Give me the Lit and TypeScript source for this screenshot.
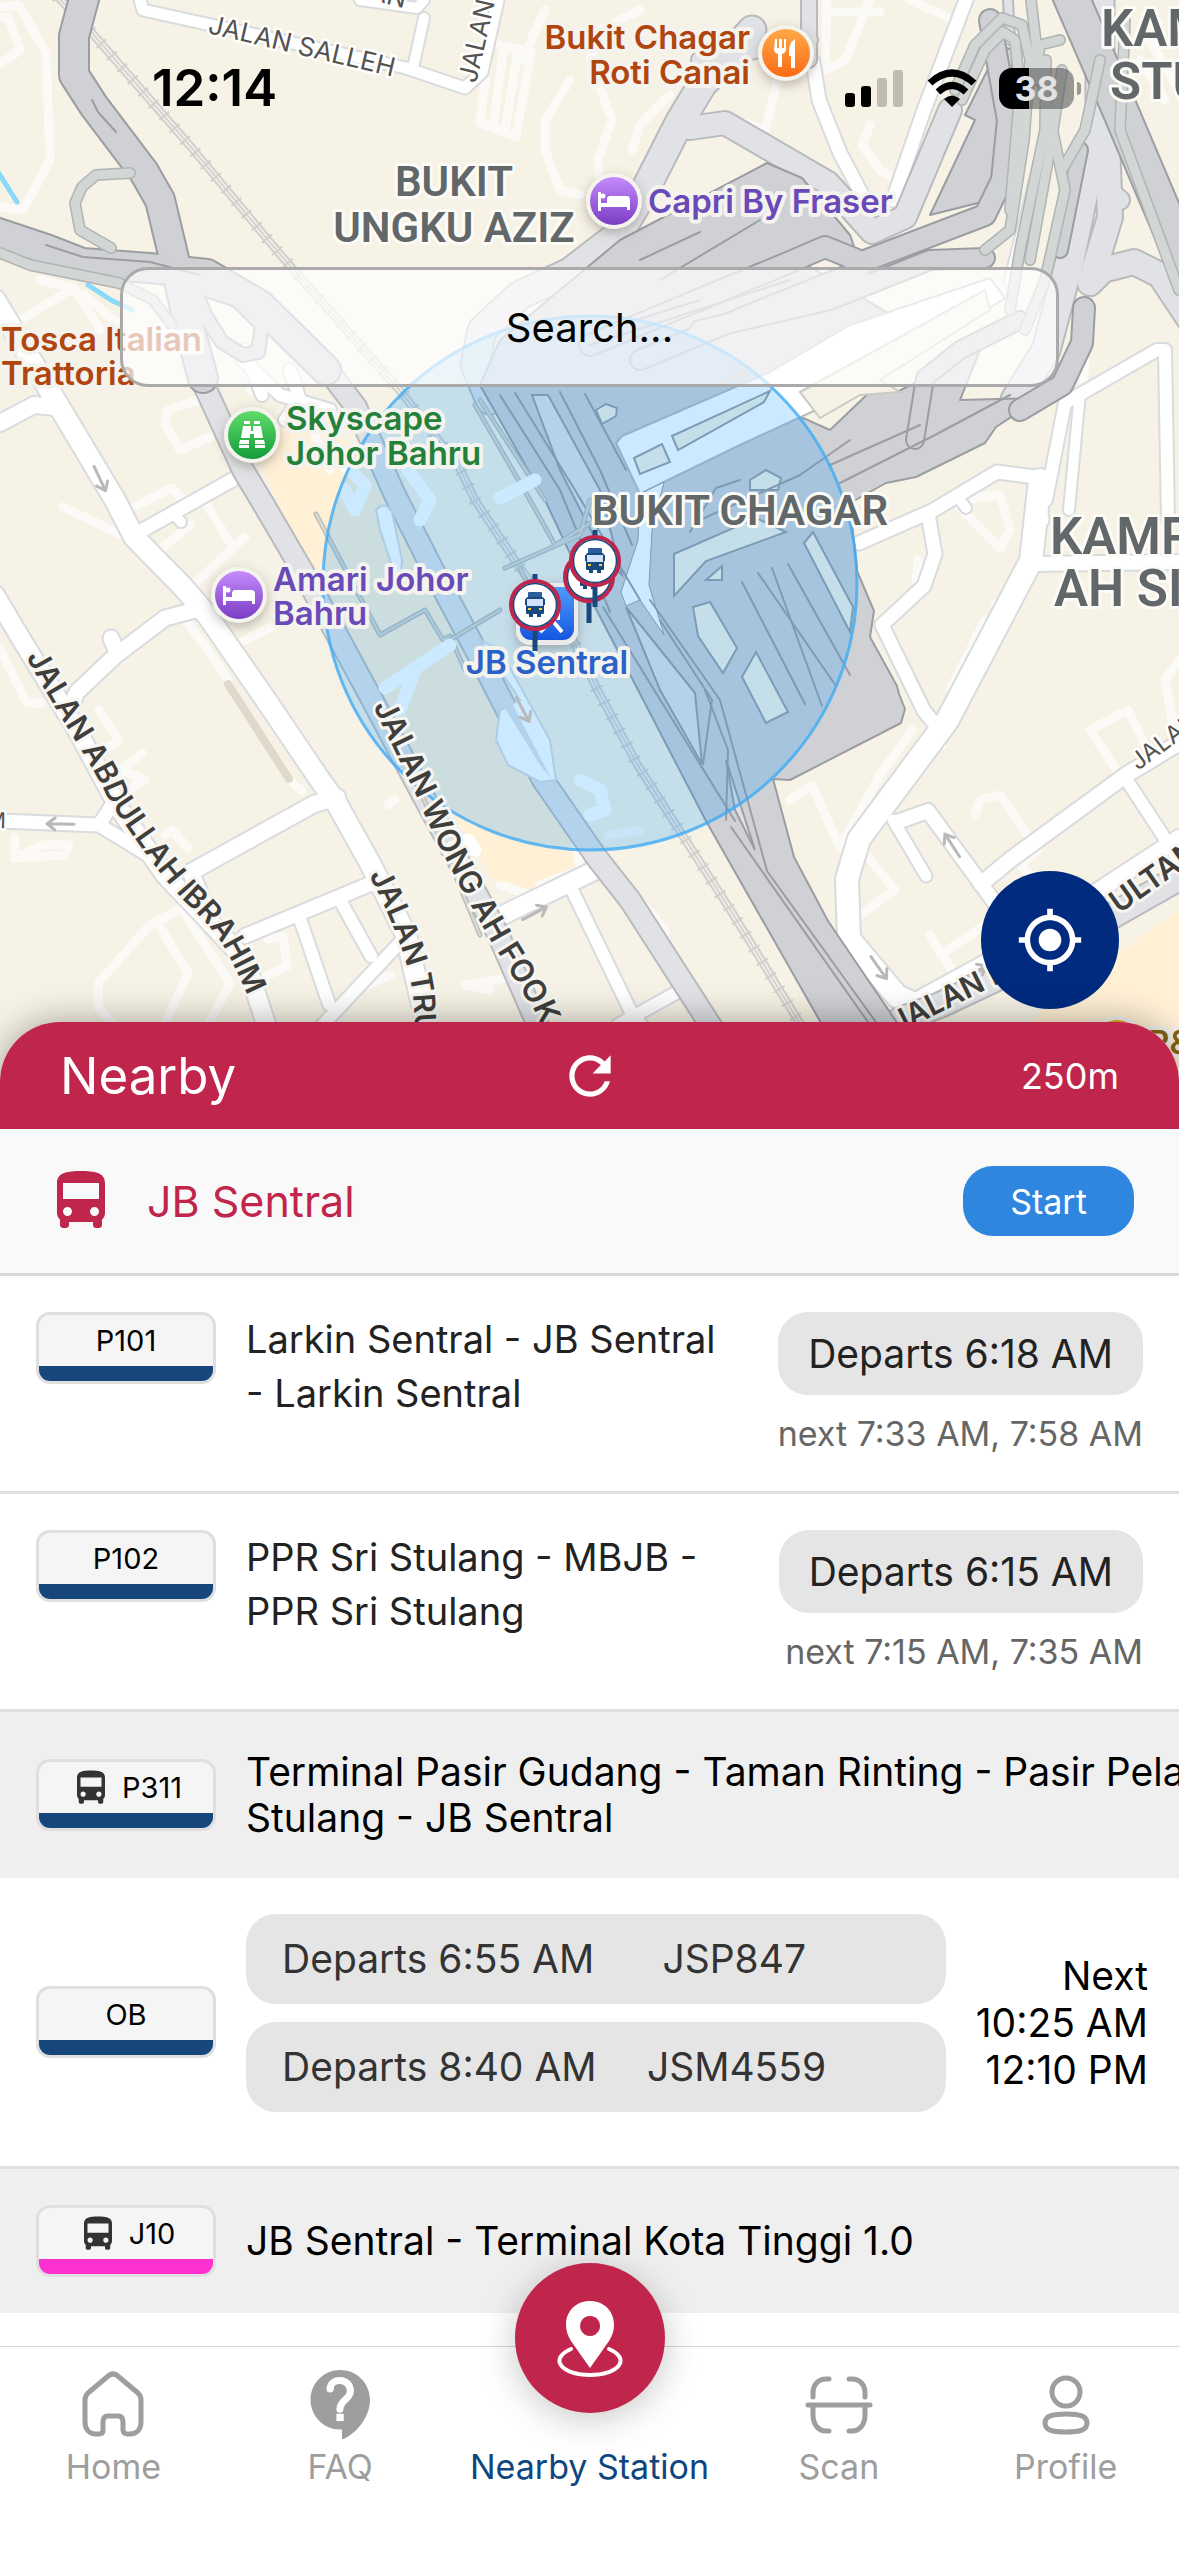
import { LitElement, html, css, svg, nothing } from "lit";
import { customElement, property } from "lit/decorators.js";

const busIcon = html`<svg viewBox="0 0 24 24" aria-hidden="true"><path fill="currentColor" fill-rule="evenodd" d="M4 16c0 .88.39 1.67 1 2.22V20c0 .55.45 1 1 1h1c.55 0 1-.45 1-1v-1h8v1c0 .55.45 1 1 1h1c.55 0 1-.45 1-1v-1.78c.61-.55 1-1.34 1-2.22V6c0-3.5-3.58-4-8-4s-8 .5-8 4v10zm3.5 1c-.83 0-1.500-.67-1.500-1.500S6.670 14 7.500 14s1.500.67 1.500 1.500S8.330 17 7.500 17zm9 0c-.83 0-1.500-.67-1.500-1.500s.67-1.500 1.500-1.500 1.500.67 1.500 1.500-.67 1.500-1.500 1.500zM18 11.300H6V6h12z"/></svg>`;

/* ---------- Map geometry, in map units ---------- */

const services = [
  "M0 7L19 5 46 53 50 160 23 210 0 207", "M0 17L8 17 20 50 0 64", "M490 43L480 123 516 137 531 52 490 43M504 46L493 127M518 49L505 132",
  "M545 10L522 60M570 80L545 120 545 150 560 190 580 195", "M199 400L168 410 165 423 180 450 210 437", "M134 507L172 488 182 500",
  "M63 507L126 537", "M206 504L233 547M245 537L190 588M190 525L160 550", "M188 623L228 679M291 781L302 791M275 625L241 642",
  "M0 649L27 703 42 703", "M180 909L149 926 98 983 98 1007 119 1030M157 922L188 973 165 1024M184 912L230 983 207 1027",
  "M268 939L283 936 287 966 264 977", "M99 710L119 740 103 750M142 753L122 770 145 780 126 791", "M15 838L15 858 65 855 69 845 42 845 15 858",
  "M165 835L172 830 188 848", "M390 975L368 985", "M40 280L74 288 20 320M74 288L100 330M84 295L120 325",
  "M600 190L598 160 612 120 590 60 600 30 640 10M632 150L640 125 670 95", "M827 0L825 70 845 60 870 0M825 12L880 12",
  "M910 0L950 18M870 125L862 145 880 170 905 185M735 120L765 130 778 80", "M957 505L1000 548 1010 530 1000 495 960 500",
  "M918 560L916 580M995 605L1003 600", "M975 815L980 800 1000 795 1038 850 1020 865 1035 880", "M790 800L812 785 840 848 880 775 912 730",
  "M858 845L895 890 860 915", "M930 935L955 975M940 955L985 925", "M1126 785L1090 730 1128 710 1145 745M1179 660L1165 680 1172 720",
  "M935 720L942 745M985 620L950 690", "M640 830L608 835M600 855L665 930 665 960M500 885L530 895M575 835L580 870 540 885", "M465 985L490 990",
  "M1140 60L1165 100M1150 40L1179 90", "M395 800L388 805M1085 360L1082 400", "M520 975L470 985", "M250 390L300 400 330 470",
];

const streets: Array<[string, number]> = [
  ["M140 0L143 10 406 68 465 88 482 72 498 0", 11], ["M413 68L424 18", 10], ["M360 0L417 8 424 0", 10],
  ["M-5 300L57 403 115 500 134 537 184 588 207 615 268 703 318 777 337 804 371 865 406 935 430 1040", 20],
  ["M0 423L34 405 57 407", 16], ["M241 475L134 535", 13], ["M172 512L181 522", 10],
  ["M-5 595L23 642 77 730 119 808 165 875 207 919 245 960 268 1030", 18], ["M195 610L165 618 115 656 77 692 69 710", 15], ["M111 638L116 650", 15],
  ["M0 821L99 825 153 858 170 875M99 825L115 800", 13], ["M337 797L314 804 191 872 200 895", 16], ["M375 882L245 936", 14],
  ["M299 916L329 1004M341 902L371 956M406 936L318 1030", 12], ["M600 868L501 916", 18], ["M572 890L630 1010 645 1030M683 989L618 1025", 12],
  ["M813 62L819 100 840 153 870 210 893 225", 13], ["M966 0L924 110 893 200", 13], ["M1045 140L1010 280", 10],
  ["M1040 480L1031 561 947 721 859 839 847 879 849 939 897 996 916 1005", 22], ["M1046 500L1065 403 1157 350 1165 350 1168 520", 12], ["M1080 393L1069 510", 10],
  ["M859 543L932 511 997 472 1035 477 1042 520", 13], ["M928 514L935 554 924 586 882 625 924 711 939 729", 13], ["M960 500L966 508", 10],
  ["M1031 564L1179 562", 14], ["M981 884L1010 860 1126 775 1179 743", 15], ["M1126 779L1179 860", 12],
  ["M897 822L928 811 1000 910", 14], ["M893 820L926 876", 11], ["M916 1001L1000 955 1179 838", 16],
  ["M262 395L245 350M243 360L280 395 330 410", 12], ["M290 370L300 400 285 420", 12],
];

const arterials: Array<[string, number]> = [
  ["M203 383L243 470 264 505 302 570 337 635 375 705 421 792 459 862 497 932 540 1030", 20],
  ["M333 377L356 407 394 493 432 568 482 662 543 780 597 858 630 900 720 1040", 20],
  ["M809 0L809 60", 14], ["M1008 0L1010 40", 8],
  ["M752 30L702 85 679 123 645 190 618 235 570 272 520 295 482 330 475 365 490 400", 27],
  ["M690 128L725 123 828 183 872 232 905 217 950 110", 22], ["M700 60L809 40", 16],
  ["M1100 0L1100 110 1088 173 1070 260 1046 350 1015 400", 27], ["M1107 143L1110 217 1090 283 1103 270 1134 262 1160 275 1190 320", 24],
  ["M1107 190L1120 200", 18], ["M900 1020L940 1005 1031 962 1179 878", 24],
];

const highways: Array<[string, number]> = [
  ["M85 -5L74 36 74 75 94 106 144 172 160 200 172 250 190 330 203 378", 28],
  ["M-5 232L46 249 82 263 149 268 207 274 260 305 326 370", 28],
  ["M190 285L237 300 262 325 258 352 243 355 222 342 205 315 195 290", 12],
  ["M590 345L790 262 825 247 862 262 985 215 1002 180 1008 120 990 20", 20],
  ["M700 330L830 300 930 260 985 258", 18], ["M640 360L760 310 860 270", 18],
  ["M1068 -10L1120 110 1190 275", 34], ["M1084 308L1082 343 1062 385 1020 410", 20],
  ["M1020 320L960 350 925 378 915 440", 16], ["M1060 250L1080 150", 14],
];

const ramps = [
  "M130 173L96 175 82 187 75 203 80 230 111 248", "M0 253L30 265 119 283 153 300 172 325",
  "M955 90L975 45 1002 18 1022 25 1030 60 1024 140 1010 230 985 250", "M962 100L985 50 1003 32 1015 40 1020 90 1010 210",
  "M1031 0L1038 60 1065 190 1045 280 1025 330", "M1046 60L1045 130 1020 250 1010 310", "M1062 70L1050 150 1030 260",
  "M1100 60L1085 130 1062 170", "M1125 20L1120 130 1179 290", "M1060 40L1040 45 1035 80",
];

const landPatches = [
  "M674 554L756 518 786 532 706 561 674 596Z", "M693 607L710 602 737 648 723 673 698 636Z", "M742 677L756 652 788 712 766 723Z",
  "M804 543L813 532 853 607 850 632Z", "M596 410L606 404 617 408 616 416 602 424Z", "M750 480L766 470 781 478 778 490 750 490Z",
  "M634 458L662 444 670 462 640 474Z", "M672 436L770 391 764 402 678 450Z", "M706 580L722 566 722 580Z",
];

const deckLines = [
  "M742 582L805 704M758 573L836 686M772 568L822 706M788 564L850 675", "M603 607L735 821M731 827L870 1025",
  "M650 600L720 700 767 871 878 1025", "M500 395L560 490 610 612M515 393L575 490 640 600",
  "M560 392L600 470 632 545M585 394L626 470", "M700 520L800 475 850 440M690 532L716 488 740 480",
  "M840 483L935 435 1010 395M830 465L920 425M590 345L790 280",
  "M46 245L83 257 150 262 200 275M92 100L98 112 116 132", "M640 260L700 232M660 280L760 220M620 325L700 300",
  "M703 764L712 700 660 620M726 820L728 750 705 690",
];

const footLines = [
  "M316 514L380 635 425 610 443 640 450 636 465 670", "M450 640L500 610M475 405L530 500 555 545 595 520M505 568L580 535 590 500",
  "M520 568L535 600 550 590M420 790L480 935", "M480 400L545 500",
];

const rail = "M57 -4L92 33 191 147 268 240 291 267 402 393 459 467 475 500 520 568 574 642 597 689 637 764 683 836 733 914 810 1040";

const bigLabels: Array<[number, number, string, number, string]> = [
  [454, 196, "BUKIT", 42, "middle"], [454, 242, "UNGKU AZIZ", 42, "middle"], [740, 525, "BUKIT CHAGAR", 42, "middle"],
  [1050, 554, "KAMPUNG", 51, "start"], [1054, 606, "AH SIANG", 51, "start"], [1101, 46, "KAMPUNG", 51, "start"], [1110, 99, "STULANG", 51, "start"],
];

const poiLabels: Array<[number, number, string, string, string]> = [
  [750, 49, "Bukit Chagar", "#b0450f", "end"], [750, 84, "Roti Canai", "#b0450f", "end"], [648, 213, "Capri By Fraser", "#6a4ab8", "start"],
  [1, 351, "Tosca Italian", "#b0450f", "start"], [1, 385, "Trattoria", "#b0450f", "start"], [286, 430, "Skyscape", "#25803a", "start"],
  [286, 465, "Johor Bahru", "#25803a", "start"], [273, 591, "Amari Johor", "#6a4ab8", "start"], [273, 625, "Bahru", "#6a4ab8", "start"],
  [547, 674, "JB Sentral", "#2b62c8", "middle"],
];

const streetLabels: Array<[string, string, string, number]> = [
  ["s1", "M207 33L420 83", "JALAN SALLEH", 26], ["s2", "M476 84L500 -20", "JALAN", 26], ["s3", "M368 -1L430 15", "AN", 26],
  ["s4", "M1138 771L1240 695", "JALAN", 24], ["s5", "M-14 828L60 829", "M", 22],
];

const roadLabels: Array<[string, string, string, number]> = [
  ["r1", "M26 657Q50 700 75 740T107 797Q125 825 143 850T184 901Q205 920 218 938T254 1010L262 1040", "JALAN ABDULLAH IBRAHIM", 30],
  ["r2", "M373 706L417 797Q437 845 465 895T494 946L536 1014 566 1080", "JALAN WONG AH FOOK", 31],
  ["r3", "M369 875Q390 915 402 950T414 1015L418 1080", "JALAN TRUS", 30],
  ["r4", "M897 1034L1010 978", "JALAN I", 30], ["r5", "M1119 914L1230 836", "ULTAN", 31],
];

const oneWay: Array<[number, number, number]> = [[100, 479, 65], [60, 824, 181], [523, 710, 62], [535, 913, -28], [952, 845, -123], [879, 968, 55], [975, 972, -28], [733, 378, -28]];

const bed = svg`<path fill="#fff" d="M-16-9h3v11h6v-5l2-2h17c3 0 4 1 4 4v10h-3V6h-26v4h-3zM-11-2.500a2.500 2.500 0 1 1 .1 0z"/>`;

const poi = (x: number, y: number, fill: string, glyph: unknown) => svg`<g transform="translate(${x} ${y})">
  <circle r="28" fill="#f5f3ee" filter="url(#soft)"/><circle r="24" fill=${fill}/>${glyph}</g>`;

const stop = (x: number, y: number, tail: number) => svg`<g transform="translate(${x} ${y})">
  <path d="M0-31V${tail}" stroke="#17497f" stroke-width="5"/>
  <circle r="24" fill="#fff" stroke="#c0254b" stroke-width="4"/><circle r="21.500" fill="none" stroke="#17497f" stroke-width="1.500"/>
  <path fill="#2c5d9c" d="M-6-13h12q1 0 1 1v4H-7v-4q0-1 1-1z"/><path fill="#17497f" d="M-7-8H7q2 0 2 2h1v6H9v8q0 1-1 1H6v3H2V9h-4v3h-4V9h-2q-1 0-1-1V0h-1v-6h1q0-2 2-2z"/>
  <path fill="#cfe1fb" d="M-8-6H8V1H-8z"/><path fill="#f6cf3c" d="M-7 3h3v2h-3zM4 3h3v2H4z"/></g>`;

@customElement("city-map")
class CityMap extends LitElement {
  static styles = css`
    :host { display: block; }
    .canvas { display: block; width: 100%; height: 100%; }
    .road { fill: none; stroke-linejoin: round; stroke-linecap: round; }
    .halo { paint-order: stroke; stroke-linejoin: round; }
    .district { font-family: Roboto, "Liberation Sans", sans-serif; font-weight: 600; fill: #626769; stroke: #fcfbf6; stroke-width: 6px; }
    .poi { font-family: Inter, "Liberation Sans", sans-serif; font-weight: 600; font-size: 33px; stroke: #f5f3ee; stroke-width: 8px; }
    .street { font-family: Inter, "Liberation Sans", sans-serif; fill: #55534f; stroke: #fff; stroke-width: 5px; }
    .avenue { font-family: Inter, "Liberation Sans", sans-serif; font-weight: 600; fill: #403e3b; stroke: #f7f6f2; stroke-width: 6px; }
  `;

  private roads(list: Array<[string, number]>, edge: string, fill: string) {
    return svg`${list.map(([d, w]) => svg`<path class="road" d=${d} stroke=${edge} stroke-width=${w + 4}/>`)}
      ${list.map(([d, w]) => svg`<path class="road" d=${d} stroke=${fill} stroke-width=${w}/>`)}`;
  }

  private along(list: Array<[string, string, string, number]>, cls: string) {
    return list.map(([id, d, text, size]) => svg`<path id=${id} d=${d} fill="none"/>
      <text class="halo ${cls}" font-size=${size}><textPath href="#${id}">${text}</textPath></text>`);
  }

  render() {
    return html`<svg class="canvas" viewBox="0 0 1179 1082" preserveAspectRatio="xMidYMin slice" role="img" aria-label="Map around JB Sentral">
      <defs>
        <linearGradient id="orange" x2="0" y2="1"><stop stop-color="#ffa94a"/><stop offset="1" stop-color="#fb6a12"/></linearGradient>
        <linearGradient id="violet" x2="0" y2="1"><stop stop-color="#c58bfb"/><stop offset="1" stop-color="#7a3cc4"/></linearGradient>
        <linearGradient id="green" x2="0" y2="1"><stop stop-color="#62dc6b"/><stop offset="1" stop-color="#129c3a"/></linearGradient>
        <linearGradient id="blue" x2="0" y2="1"><stop stop-color="#4d9dfb"/><stop offset="1" stop-color="#1556df"/></linearGradient>
        <filter id="soft" x="-50%" y="-50%" width="200%" height="200%"><feDropShadow dx="0" dy="4" stdDeviation="6" flood-color="#5b5548" flood-opacity=".4"/></filter>
      </defs>
      <path fill="#f6f2e5" d="M0 0H1179V1082H0z"/>
      <path fill="#fff0d6" d="M275 420L345 440 500 680 590 840 582 865 520 896 494 882 440 790 330 640 278 505 262 465zM1010 1050L1050 1000 1179 910V1082H990z"/>
      ${services.map((d) => svg`<path class="road" d=${d} stroke="#fbfaf7" stroke-width="9"/>`)}
      <path class="road" d="M228 684L289 779" stroke="#dfd9cc" stroke-width="8"/>
      <path class="road" d=${rail} stroke="#d0d0ce" stroke-width="9"/><path class="road" d=${rail} stroke="#f1efe6" stroke-width="5"/>
      <path d=${rail} fill="none" stroke="#d0d0ce" stroke-width="13" stroke-dasharray="2 14"/><path class="road" d=${rail} stroke="#d0d0ce" stroke-width="1.500"/>
      <path class="road" d="M-2 172L17 202M88 285L111 300 132 310" stroke="#87daf9" stroke-width="5"/>
      ${this.roads(streets, "#d9dbde", "#fff")}
      ${this.roads(arterials, "#b9babe", "#e1e2e6")}
      <g fill="#d0d1d5" stroke="#9b9da2" stroke-width="2" stroke-linejoin="round">
        <path d="M480 385L500 340 620 240 767 163 802 178 850 235 858 258 823 240 790 255 900 320 850 350 740 390 830 430 874 388 897 392 980 350 960 400 1040 398 996 427 985 443 916 477 886 483 850 503 857 571 874 611 870 637 897 686 899 694 905 709 901 723 790 780 773 779 794 857 828 921 902 1030 825 1030 706 821 595 607 545 500z"/>
        <path d="M965 115L1000 45 1012 50 1012 120 990 200 930 215 975 120z"/>
      </g>
      ${this.roads(highways, "#9b9da2", "#d0d1d5")}
      ${ramps.map((d) => svg`<path class="road" d=${d} stroke="#b0b4b3" stroke-width="12"/>`)}
      ${ramps.map((d) => svg`<path class="road" d=${d} stroke="#d2d6d4" stroke-width="9"/>`)}
      <path fill="#fff" stroke="#b9babe" stroke-width="2" stroke-linejoin="round" d="M616 443L622 436 770 372 850 325 990 278 1005 298 870 385 740 445 664 482 640 494z"/>
      <path fill="#f6f2e5" stroke="#c9c9c5" stroke-width="2" d="M800 392L985 290 990 310 880 380 900 392 860 395 820 418z"/>
      <path fill="#e1e2e6" stroke="#9b9da2" stroke-width="2" d="M626 607L695 693 702 764 660 690zM532 395L548 395 600 490 622 575 606 560 560 470zM726 760L755 850 735 810z"/>
      <path fill="#fff" stroke="#9b9da2" stroke-width="1" d="M640 494L664 482 652 530 649 585 664 635 640 600 626 606 621 592 638 540z"/>
      <g fill="#f6f2e5" stroke="#9b9da2" stroke-width="2">${landPatches.map((d) => svg`<path d=${d}/>`)}</g>
      ${deckLines.map((d) => svg`<path class="road" d=${d} stroke="#9b9da2" stroke-width="2"/>`)}
      ${footLines.map((d) => svg`<path class="road" d=${d} stroke="#bebfbb" stroke-width="5"/><path class="road" d=${d} stroke="#dbdad3" stroke-width="2"/>`)}
      <path fill="#fff" stroke="#d9dbde" stroke-width="2" d="M376 510Q384 500 392 512L402 560 400 590 380 530zM480 640L500 650 550 740 556 780 540 782 508 765 496 740 500 710 520 700z"/>
      <path fill="#e1e2e6" d="M484 655L500 700 540 765 552 780 500 680z"/>
      <path class="road" d="M385 688L450 645M415 670L400 710M345 490L355 510 365 485 345 465M500 498L535 480M408 470L430 500 420 520M448 850L468 840 475 850M580 780L600 790 605 810 590 815" stroke="#fff" stroke-width="13"/>
      <circle cx="590" cy="583" r="267" fill="#0896ff" fill-opacity=".21" stroke="#3fabf5" stroke-opacity=".8" stroke-width="3"/>
      ${oneWay.map(([x, y, a]) => svg`<path class="road" transform="translate(${x} ${y}) rotate(${a})" d="M-14 0H12M5-6L13 0 5 6" stroke="#b9b9b9" stroke-width="3"/>`)}
      ${this.along(streetLabels, "street")}
      ${this.along(roadLabels, "avenue")}
      ${bigLabels.map(([x, y, t, s, a]) => svg`<text class="halo district" x=${x} y=${y} font-size=${s} text-anchor=${a}>${t}</text>`)}
      <rect x="516" y="583" width="62" height="62" rx="14" fill="#ecebe9" filter="url(#soft)"/><rect x="520" y="587" width="54" height="53" rx="11" fill="url(#blue)"/>
      <path d="M540 632l9-9M552 620l10 12M536 600h22v18h-22z" fill="none" stroke="#fff" stroke-width="4"/>
      ${poiLabels.map(([x, y, t, c, a]) => svg`<text class="halo poi" x=${x} y=${y} fill=${c} text-anchor=${a}>${t}</text>`)}
      ${poi(786, 53, "url(#orange)", svg`<path fill="#fff" d="M-11-14h2v9h2v-9h3v9h2v-9h2v10q0 4-4 5v13h-4V1q-4-1-4-5zM9-14v29H5V3H3Q2-10 9-14z"/>`)}
      ${poi(614, 201, "url(#violet)", bed)}${poi(239, 595, "url(#violet)", bed)}
      ${poi(252, 435, "url(#green)", svg`<path fill="#fff" d="M-8-14h6v3h-6zM2-14h6v3H2zM-9-9h8v5h2v-5h8l2 12H2v-4h-4v4h-9zM-12 5h9v4h-10zM3 5h9l1 4H3zM-13 10h10v3h-10zM3 10h10v3H3z"/>`)}
      <circle cx="1117" cy="1042" r="24" fill="#dcb50f" stroke="#f5f3ee" stroke-width="4"/><text class="halo poi" x="1148" y="1054" fill="#8a6312">R&amp;</text>
      ${stop(589, 577, 46)}${stop(595, 561, 46)}${stop(535, 605, 46)}
    </svg>`;
  }
}

@customElement("route-badge")
class RouteBadge extends LitElement {
  @property() code = "";
  @property() tone = "navy";
  @property({ type: Boolean }) bus = false;

  static styles = css`
    :host { display: block; flex: none; width: 180px; }
    .badge { box-sizing: border-box; height: 72px; border: 3px solid #dfdfdf; border-radius: 14px; background: #f5f5f5; overflow: hidden; display: flex; flex-direction: column; }
    .code { flex: 1; display: flex; align-items: center; justify-content: center; gap: 10px; font-size: 29px; line-height: 32px; color: #000; }
    .code svg { width: 42px; height: 42px; color: #333; }
    .bar { height: 15px; background: #17467c; }
    .bar.pink { background: #ff30d0; }
  `;

  render() {
    return html`<div class="badge"><div class="code">${this.bus ? busIcon : nothing}<span>${this.code}</span></div><div class="bar ${this.tone}"></div></div>`;
  }
}

const routes = [
  { code: "P101", name: "Larkin Sentral - JB Sentral - Larkin Sentral", departs: "Departs 6:18 AM", next: "next 7:33 AM, 7:58 AM" },
  { code: "P102", name: "PPR Sri Stulang - MBJB - PPR Sri Stulang", departs: "Departs 6:15 AM", next: "next 7:15 AM, 7:35 AM" },
];

const departures = [
  { time: "Departs 6:55 AM", plate: "JSP847" },
  { time: "Departs 8:40 AM", plate: "JSM4559" },
];

const tabs = [
  { label: "Home", icon: svg`<path d="M8 33c0-3 1-5 3-7L30 10c4-4 8-4 12 0l19 16c2 2 3 4 3 7v22c0 7-4 12-11 12H50c-3 0-4-2-4-4v-8c0-4-2-6-5-6H31c-3 0-5 2-5 6v8c0 3-1 4-4 4h-3C12 67 8 62 8 55z"/>` },
  { label: "FAQ", icon: svg`<g transform="translate(-4 -4) scale(3.500)" stroke="none"><path fill="currentColor" d="M11.500 2C6.810 2 3 5.810 3 10.500S6.810 19 11.500 19h.5v3c4.860-2.340 8-7 8-11.500C20 5.810 16.190 2 11.500 2z"/><path fill="none" stroke="#fff" stroke-width="2" d="M8.600 7.400C8.600 6 9.800 5 11.400 5s3 1.200 3 3c0 2.400-3 2.600-3 5.200"/><circle cx="8.600" cy="7.200" r="1" fill="#fff"/><path fill="#fff" d="M10.400 14.500h2.100v2.100h-2.100z"/></g>` },
  { label: "Nearby Station", icon: null },
  { label: "Scan", icon: svg`<path d="M26 12h-3C15 12 10 18 10 26v4M46 12h3c8 0 13 6 13 14v4M10 40v8c0 9 5 16 13 16h3M62 40v8c0 9-5 16-13 16h-3M5 38h62"/>` },
  { label: "Profile", icon: svg`<circle cx="36" cy="25" r="14"/><path d="M15 56c0-7 7-9 21-9s21 2 21 9-7 9-21 9-21-2-21-9z"/>` },
];

@customElement("app-root")
class AppRoot extends LitElement {
  static styles = css`
    :host { display: flex; flex-direction: column; min-height: 100vh; background: #fff; color: #000; font-family: Inter, "Liberation Sans", sans-serif; overflow: hidden; }
    * { box-sizing: border-box; }
    svg { display: block; flex: none; }
    ul { list-style: none; margin: 0; padding: 0; }
    h1, h2, p { margin: 0; font-weight: 400; }
    button { border: 0; padding: 0; font: inherit; cursor: pointer; }

    .hero { position: relative; flex: 1; min-height: 600px; display: flex; flex-direction: column; align-items: stretch; padding: 60px 60px 13px; }
    .map { position: absolute; inset: 0 0 -60px; }
    .status { position: relative; display: flex; align-items: center; justify-content: space-between; padding: 0 45px 0 92px; height: 56px; }
    .clock { font-size: 51px; line-height: 56px; font-weight: 600; }
    .indicators { display: flex; align-items: center; gap: 22px; }
    .battery { position: relative; display: flex; align-items: center; justify-content: center; width: 75px; height: 41px; border-radius: 13px; background: linear-gradient(90deg, #000 40%, rgba(90, 90, 92, .6) 40%); color: #e2e2e2; font-size: 34px; line-height: 41px; font-weight: 700; }
    .battery::after { content: ""; position: absolute; left: 78px; width: 4px; height: 13px; border-radius: 0 4px 4px 0; background: rgba(90, 90, 92, .6); }
    .search { position: relative; margin: 151px 60px 0; height: 120px; border: 3px solid #a9aaa9; border-radius: 28px; background: rgba(255, 255, 255, .7); text-align: center; font: inherit; font-size: 40px; color: #000; outline: none; min-width: 0; }
    .search::placeholder { color: #000; opacity: 1; }
    .locate { position: relative; margin-top: auto; align-self: flex-end; display: grid; place-items: center; width: 138px; height: 138px; border-radius: 50%; background: #002b7f; color: #fff; }
    .locate svg { width: 68px; height: 68px; }

    .sheet { position: relative; background: #fff; border-radius: 60px 60px 0 0; box-shadow: 0 0 36px rgba(0, 0, 0, .35); padding-bottom: 33px; }
    .head { display: grid; grid-template-columns: 1fr auto 1fr; align-items: center; height: 107px; padding: 0 60px; border-radius: 60px 60px 0 0; background: #c0254b; color: #fff; }
    .title { font-size: 51px; line-height: 60px; }
    .refresh { background: none; color: inherit; }
    .refresh svg { width: 62px; height: 62px; }
    .radius { text-align: right; font-size: 36px; line-height: 44px; }
    .station { display: flex; align-items: center; gap: 30px; height: 147px; padding: 0 45px; border-bottom: 3px solid #d8d8d8; background: #f9f9f9; }
    .station svg { width: 72px; height: 72px; color: #c0254b; }
    .station h2 { flex: 1; font-size: 43px; line-height: 50px; color: #c0254b; }
    .start { width: 171px; height: 70px; border-radius: 30px; background: #2f86df; color: #fff; font-size: 34px; }

    .route { display: flex; align-items: flex-start; gap: 30px; min-height: 218px; padding: 36px 36px 33px; border-bottom: 3px solid #dfdfdf; }
    .name { flex: 1; max-width: 500px; padding-right: 20px; font-size: 38px; line-height: 54px; color: #222; }
    .times { display: flex; flex-direction: column; align-items: flex-end; gap: 18px; margin-left: auto; white-space: nowrap; }
    .pill { padding: 0 30px; border-radius: 30px; background: #e5e5e5; font-size: 39px; line-height: 83px; color: #222; }
    .later { font-size: 34px; line-height: 42px; color: #666; }
    .group { display: flex; align-items: center; gap: 30px; min-height: 144px; padding: 36px; background: #efefef; white-space: nowrap; overflow: hidden; font-size: 39px; line-height: 46px; }
    .group.tall { min-height: 166px; }
    .trips { display: flex; align-items: center; gap: 30px; min-height: 291px; padding: 36px 31px 36px 36px; border-bottom: 3px solid #dfdfdf; }
    .slots { flex: 1; display: flex; flex-direction: column; gap: 18px; padding-bottom: 18px; }
    .slot { display: flex; height: 90px; border-radius: 30px; background: #e5e5e5; padding: 0 36px; font-size: 39px; line-height: 90px; color: #333; }
    .plate { width: 280px; text-align: center; }
    .upcoming { text-align: right; font-size: 39px; line-height: 47px; white-space: nowrap; }

    .tabs { position: relative; border-top: 1px solid #d4d4d4; background: #fff; }
    .tabs ul { display: grid; grid-template-columns: 1fr 1fr 272px 1fr 1fr; height: 209px; }
    .tab { position: relative; display: flex; flex-direction: column; align-items: center; padding-top: 20px; gap: 8px; color: #9e9e9e; text-decoration: none; font-size: 34px; line-height: 40px; white-space: nowrap; }
    .tab svg { width: 72px; height: 72px; fill: none; stroke: currentColor; stroke-width: 5; stroke-linecap: round; stroke-linejoin: round; }
    .tab.active { color: #0f4680; padding-top: 100px; }
    .fab { position: absolute; top: -84px; display: grid; place-items: center; width: 150px; height: 150px; border-radius: 50%; background: #c0254b; color: #fff; box-shadow: 0 6px 36px rgba(0, 0, 0, .22); }
    .fab svg { width: 80px; height: 80px; }
  `;

  render() {
    return html`
      <section class="hero">
        <city-map class="map"></city-map>
        <div class="status">
          <span class="clock">12:14</span>
          <div class="indicators">
            <svg width="60" height="38" viewBox="0 0 60 38" aria-hidden="true"><g fill="#000"><rect y="24" width="10" height="14" rx="3"/><rect x="16" y="17" width="10" height="21" rx="3"/><g opacity=".22"><rect x="32" y="9" width="10" height="29" rx="3"/><rect x="48" y="1" width="10" height="37" rx="3"/></g></g></svg>
            <svg width="50" height="38" viewBox="0 0 50 38" aria-hidden="true"><path d="M3 14Q25-6 47 14M11 23Q25 10 39 23" fill="none" stroke="#000" stroke-width="7"/><path d="M17 30Q25 23 33 30L25 38z"/></svg>
            <span class="battery">38</span>
          </div>
        </div>
        <input class="search" type="text" placeholder="Search..." aria-label="Search" />
        <button class="locate" aria-label="My location"><svg viewBox="0 0 24 24"><path fill="currentColor" d="M12 8c-2.210 0-4 1.790-4 4s1.790 4 4 4 4-1.790 4-4-1.790-4-4-4zm8.940 3c-.46-4.170-3.770-7.480-7.940-7.940V1h-2v2.060C6.830 3.520 3.520 6.830 3.060 11H1v2h2.060c.46 4.170 3.770 7.480 7.940 7.940V23h2v-2.060c4.170-.46 7.480-3.770 7.940-7.940H23v-2h-2.060zM12 19c-3.870 0-7-3.130-7-7s3.130-7 7-7 7 3.130 7 7-3.130 7-7 7z"/></svg></button>
      </section>
      <main class="sheet">
        <header class="head">
          <h1 class="title">Nearby</h1>
          <button class="refresh" aria-label="Refresh"><svg viewBox="0 0 24 24"><path fill="currentColor" d="M17.650 6.350C16.200 4.900 14.210 4 12 4c-4.420 0-7.990 3.580-7.990 8s3.570 8 7.990 8c3.730 0 6.840-2.550 7.730-6h-2.080c-.82 2.330-3.040 4-5.650 4-3.310 0-6-2.690-6-6s2.690-6 6-6c1.660 0 3.140.69 4.220 1.780L13 11h7V4l-2.350 2.350z"/></svg></button>
          <span class="radius">250m</span>
        </header>
        <div class="station">${busIcon}<h2>JB Sentral</h2><button class="start">Start</button></div>
        <ul>
          ${routes.map((r) => html`<li class="route">
            <route-badge code=${r.code}></route-badge>
            <p class="name">${r.name}</p>
            <div class="times"><span class="pill">${r.departs}</span><span class="later">${r.next}</span></div>
          </li>`)}
          <li class="group tall"><route-badge code="P311" bus></route-badge><p>Terminal Pasir Gudang - Taman Rinting - Pasir Pelangi -<br />Stulang - JB Sentral</p></li>
          <li class="trips">
            <route-badge code="OB"></route-badge>
            <div class="slots">${departures.map((d) => html`<div class="slot"><span>${d.time}</span><span class="plate">${d.plate}</span></div>`)}</div>
            <p class="upcoming">Next<br />10:25 AM<br />12:10 PM</p>
          </li>
          <li class="group"><route-badge code="J10" tone="pink" bus></route-badge><p>JB Sentral - Terminal Kota Tinggi 1.0</p></li>
        </ul>
      </main>
      <nav class="tabs"><ul>
        ${tabs.map((t) => html`<li><a class="tab ${t.icon ? "" : "active"}" href="#">
          ${t.icon
            ? html`<svg viewBox="0 0 72 72" aria-hidden="true">${t.icon}</svg>`
            : html`<span class="fab"><svg viewBox="0 0 80 80" aria-hidden="true"><path fill="#fff" stroke="none" fill-rule="evenodd" d="M40 3c14 0 24 10 24 24 0 6-2 11-5 16L40 70 21 43c-3-5-5-10-5-16C16 13 26 3 40 3zm0 15a10 10 0 1 0 .1 0z"/><path d="M21 51C-2 61 12 77 40 77S82 61 59 51" stroke-width="4"/></svg></span>`}
          <span>${t.label}</span></a></li>`)}
      </ul></nav>`;
  }
}
